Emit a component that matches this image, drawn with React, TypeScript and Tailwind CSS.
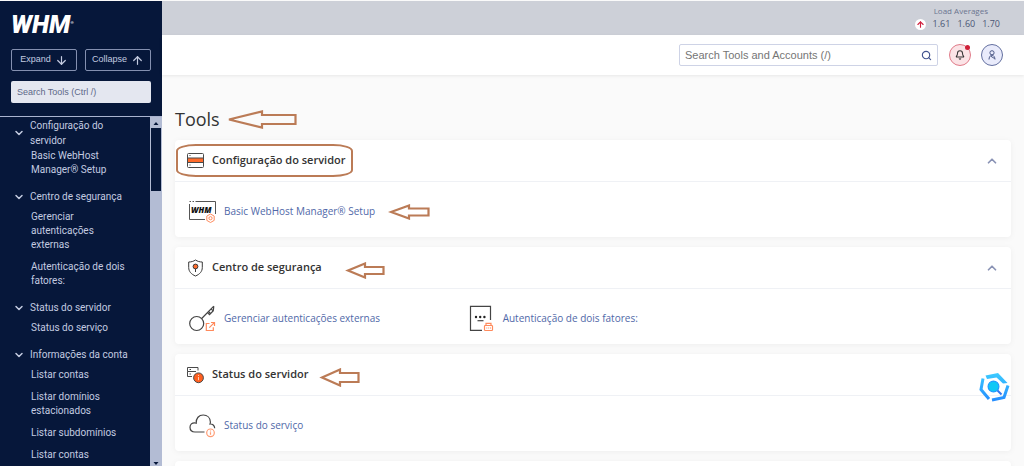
import React from "react";
import { ArrowDown, ArrowUp, Bell, ChevronDown, ChevronUp, Search } from "lucide-react";

type NavGroup = { title: string; items: string[]; tight?: boolean };

const navGroups: NavGroup[] = [
  { title: "Configuração do servidor", items: ["Basic WebHost Manager® Setup"], tight: true },
  { title: "Centro de segurança", items: ["Gerenciar autenticações externas", "Autenticação de dois fatores:"] },
  { title: "Status do servidor", items: ["Status do serviço"] },
  {
    title: "Informações da conta",
    items: ["Listar contas", "Listar domínios estacionados", "Listar subdomínios", "Listar contas"],
  },
];

function Arrow({ width, height, className }: { width: number; height: number; className: string }) {
  const head = Math.round(width * 0.5);
  const m = height / 2;
  const s = height > 18 ? 4.5 : 3.5;
  const points = [
    [3, m],
    [head, 1.5],
    [head, m - s],
    [width - 1.5, m - s],
    [width - 1.5, m + s],
    [head, m + s],
    [head, height - 1.5],
  ]
    .map((p) => p.join(","))
    .join(" ");
  return (
    <svg aria-hidden="true" width={width} height={height} className={"pointer-events-none absolute left-full " + className}>
      <polygon points={points} fill="none" stroke="#bb7b56" strokeWidth="2.2" />
    </svg>
  );
}

function ServerIcon() {
  return (
    <svg width="17" height="17" viewBox="0 0 17 17" fill="none" stroke="#4a4a4a" strokeWidth="1">
      <rect x=".5" y="1.500" width="16" height="14" rx="1" />
      <rect x=".5" y="6" width="16" height="4.500" fill="#ff6c2c" />
      <path d="M2.500 3.500h1M2.500 13h1" />
    </svg>
  );
}

function ShieldIcon() {
  return (
    <svg width="17" height="18" viewBox="0 0 17 18" fill="none" stroke="#3a3a3a" strokeWidth="1">
      <path d="M8.500 1C6.500 2.400 4.200 3 1.700 3v5.500c0 4 2.600 6.800 6.800 8.500 4.200-1.700 6.800-4.500 6.800-8.500V3C12.800 3 10.500 2.400 8.500 1z" />
      <path d="M8.500 9v4" />
      <circle cx="8.500" cy="7.500" r="2.400" fill="#ff6c2c" />
    </svg>
  );
}

function StatusIcon() {
  return (
    <svg width="17" height="18" viewBox="0 0 17 18" fill="none" stroke="#4a4a4a" strokeWidth="1">
      <path d="M11 4.500V1.500H.5v4H9M.5 5.500v5h4.500M2.500 3.500h1.500M2.500 8h1.500" />
      <circle cx="11.500" cy="11.800" r="4.900" fill="#ff5f1f" />
      <path d="M11.500 11v3.200M11.500 9v1" stroke="#ffc9b0" />
    </svg>
  );
}

function WhmSetupIcon() {
  return (
    <svg width="27" height="23" viewBox="0 0 27 23" fill="none" stroke="#555" strokeWidth="1">
      <path d="M.5 4v15.500H16M6.500 1.500H26.500V14M.5 1.500h1.500M3.500 1.500h1.500" />
      <text x="2" y="13" fill="#111" stroke="none" className="font-['Open_Sans'] text-[8px] font-extrabold italic">
        WHM
      </text>
      <g stroke="#ff8a5c">
        <path d="M21.500 14l3.700 2.100v4.300l-3.700 2.100-3.700-2.100v-4.300z" fill="#fff" />
        <circle cx="21.500" cy="18.200" r="1.600" />
      </g>
    </svg>
  );
}

function KeyIcon() {
  return (
    <svg width="27" height="27" viewBox="0 0 27 27" fill="none" stroke="#444" strokeWidth="1.200">
      <circle cx="7.700" cy="18.500" r="7" />
      <path d="M12.700 13.500L24.800 1.200M18.500 7.600l2 2 3.600-3.700-2-2M21.500 8.500l-1.500-1.500M24.800 1.200l-.5 4.500" />
      <g stroke="#ff8a5c">
        <path d="M20.500 18.500h-3.200v7h7v-3.300M22 17.500h3.500V21M25.300 17.700l-5 5" />
      </g>
    </svg>
  );
}

function TwoFactorIcon() {
  return (
    <svg width="27" height="27" viewBox="-2 0 27 27" fill="none" stroke="#444" strokeWidth="1.200">
      <path d="M12 25.400H.5V1.400h20V15" />
      <g fill="#222" stroke="none">
        <circle cx="6" cy="12" r="1.200" />
        <circle cx="10.200" cy="12" r="1.200" />
        <circle cx="14.400" cy="12" r="1.200" />
      </g>
      <path d="M7.500 15.700h6" />
      <g stroke="#ff8a5c">
        <rect x="14.500" y="20.500" width="8" height="5" rx=".8" />
        <path d="M16 20.300V18.300h5v2M16.300 23h1M18.200 23h1M20 23h1" />
      </g>
    </svg>
  );
}

function CloudIcon() {
  return (
    <svg width="27" height="25" viewBox="0 0 27 25" fill="none" stroke="#444" strokeWidth="1.200">
      <path d="M15.500 19H6C3 19 1 17 1 14.300 1 11.500 3 9.600 6 9.800c.3 0 .8.100 1.200.3C7 5.300 9.800 2 14.200 2c4 0 7 2.600 7.200 7 0 .8-.2 1.500-.4 2 2.600-.2 4.500 1.500 4.700 4.200" />
      <circle cx="21.500" cy="19.800" r="3.800" stroke="#ff9a72" />
      <path d="M21.500 19.300v2.500M21.500 17.500v1" stroke="#ff9a72" />
    </svg>
  );
}

function Profile() {
  return (
    <svg width="8" height="10" viewBox="0 0 8 10" fill="none" stroke="#4a5785" strokeWidth="1">
      <circle cx="4" cy="2.800" r="2.100" />
      <path d="M1 9.500C1.100 7 2.200 5.500 4 5c1.800.5 2.900 2 3 4.500M2.500 6L6.500 8.500" />
    </svg>
  );
}

function AssistantBadge() {
  return (
    <svg width="32" height="32" viewBox="0 0 32 32" fill="none" strokeWidth="3">
      <defs>
        <linearGradient id="hex" x1="0" y1="0" x2="0" y2="32" gradientUnits="userSpaceOnUse">
          <stop offset="0" stopColor="#3fd0ff" />
          <stop offset="1" stopColor="#2288ff" />
        </linearGradient>
      </defs>
      <path d="M7.500 4.500L20 2l9.500 10-4.500.5-6.500-6L9 8z" fill="url(#hex)" />
      <path d="M5 7.500L3 18.500 11 28" stroke="url(#hex)" />
      <path d="M14 29L26 26.500 30 14.500" stroke="url(#hex)" />
      <circle cx="15.500" cy="15.500" r="5.400" fill="#10c8f5" stroke="#1f9cff" strokeWidth="1.200" />
      <path d="M19.500 19.500l4 4" stroke="#3377ee" strokeWidth="2" />
    </svg>
  );
}

type Tool = { label: string; icon: React.ReactNode; arrow?: React.ReactNode };

function ToolCard({
  title,
  icon,
  tools,
  arrow,
  highlighted,
  collapsible = true,
}: {
  title: string;
  icon: React.ReactNode;
  tools: Tool[];
  arrow?: React.ReactNode;
  highlighted?: boolean;
  collapsible?: boolean;
}) {
  return (
    <section className="rounded bg-white shadow-[0_1px_6px_rgba(0,0,0,0.05)]">
      <header className="flex h-[42px] items-center justify-between border-b border-[#eff1f5] px-3">
        <h2 className="relative flex items-center gap-2 text-[11px] font-semibold text-[#333]">
          {icon}
          <span>{title}</span>
          {highlighted && (
            <span className="pointer-events-none absolute -inset-y-2 -right-2 -left-[11px] rounded-[20px/7px] border-2 border-[#bb7b56]" />
          )}
          {arrow}
        </h2>
        {collapsible && (
          <button type="button" aria-label={title} className="text-[#8a93b5]">
            <ChevronUp size={14} strokeWidth={3} />
          </button>
        )}
      </header>
      <div className="grid h-[55px] grid-cols-3 items-center pt-[3px]">
        {tools.map((t) => (
          <div key={t.label} className="flex items-center px-[14px]">
            <a href="#" className="relative flex items-center text-[#5068a8]">
              <span className="flex w-[35px] items-center">{t.icon}</span>
              <span className="text-[10px] whitespace-nowrap">{t.label}</span>
              {t.arrow}
            </a>
          </div>
        ))}
      </div>
    </section>
  );
}

function Sidebar() {
  return (
    <aside className="flex w-[162px] shrink-0 flex-col bg-[#06173a] font-[Roboto,sans-serif] text-[#c3cbe0]">
      <div className="border-b border-[#a9b3cf] px-[11px] pt-3 pb-[13px]">
        <div className="flex h-6 items-center text-[25px] leading-6 font-black text-white italic">
          WHM<sup className="text-[4px] not-italic">®</sup>
        </div>
        <div className="mt-3 grid grid-cols-2 gap-2 font-['Liberation_Sans',sans-serif] text-[9px]">
          <button type="button" className="flex h-[22px] items-center justify-center gap-1 rounded-xs border border-[#8490b0]">
            Expand <ArrowDown size={13} strokeWidth={2.2} />
          </button>
          <button type="button" className="flex h-[22px] items-center justify-center gap-1 rounded-xs border border-[#8490b0]">
            Collapse <ArrowUp size={13} strokeWidth={2.2} />
          </button>
        </div>
        <input
          type="text"
          aria-label="Search Tools"
          placeholder="Search Tools (Ctrl /)"
          className="mt-[10px] block h-[22px] w-full rounded-xs bg-[#e4e7f0] px-[6px] font-['Liberation_Sans',sans-serif] text-[9px] placeholder:text-[#5d6888]"
        />
      </div>
      <div className="flex min-h-0 grow">
        <nav className="min-w-0 grow overflow-hidden pt-px text-[10px]">
          {navGroups.map((g) => (
            <div key={g.title} className="mb-3">
              <button type="button" className="flex w-full items-center gap-[5px] pr-4 pl-[13px] text-left leading-[15px]">
                <ChevronDown size={12} strokeWidth={3} className="shrink-0" />
                <span>{g.title}</span>
              </button>
              <ul className={"flex flex-col gap-2 pr-4 pl-[31px] leading-[14px] " + (g.tight ? "mt-px" : "mt-[6px]")}>
                {g.items.map((item, i) => (
                  <li key={i}>
                    <a href="#" className="block">
                      {item}
                    </a>
                  </li>
                ))}
              </ul>
            </div>
          ))}
        </nav>
        <div aria-hidden="true" className="flex w-3 shrink-0 flex-col items-center bg-[#b3bcd4] text-[#06173a]">
          <svg width="12" height="11" fill="currentColor">
            <path d="M3.500 8L6 5l2.500 3z" />
          </svg>
          <div className="h-[63px] w-[10px] bg-[#06173a]" />
          <svg width="12" height="6" fill="currentColor" className="mt-auto">
            <path d="M3.500 2L6 5l2.500-3z" />
          </svg>
        </div>
      </div>
    </aside>
  );
}

export default function App() {
  return (
    <div className="flex h-screen overflow-hidden bg-[#fafafa] pt-px font-['Open_Sans',sans-serif]">
      <Sidebar />
      <div className="flex min-w-0 grow flex-col">
        <div className="flex h-[34px] shrink-0 flex-col items-end bg-[#cdd0d8] pt-1 pr-6 text-[#4b5675]">
          <div className="pr-3 text-[8px] leading-3 text-[#6b7590]">Load Averages</div>
          <div className="flex items-center gap-[7px] text-[9px] leading-[14px]">
            <span className="flex size-[11px] items-center justify-center rounded-full bg-white text-[#d0213f]">
              <ArrowUp size={9} strokeWidth={3} />
            </span>
            <span>1.61</span>
            <span>1.60</span>
            <span>1.70</span>
          </div>
        </div>
        <header className="z-10 flex h-10 shrink-0 items-center justify-end bg-white pr-[21px] shadow-[0_1px_3px_rgba(0,0,0,0.08)]">
          <label className="flex h-[22px] w-[259px] items-center rounded-xs border border-[#ced3e6] px-[5px]">
            <input
              type="text"
              aria-label="Search Tools and Accounts"
              placeholder="Search Tools and Accounts (/)"
              className="min-w-0 grow font-['Liberation_Sans',sans-serif] text-[11px] outline-none placeholder:text-[#757575]"
            />
            <Search size={11} strokeWidth={2.5} className="text-[#43548f]" />
          </label>
          <button
            type="button"
            aria-label="Notifications"
            className="relative ml-[11px] flex size-[22px] items-center justify-center rounded-full border border-[#e07a88] bg-[#fbe3e6] text-[#333]"
          >
            <Bell size={10} strokeWidth={2.5} />
            <span className="absolute top-0 right-0 size-[5px] rounded-full bg-[#cf1f37]" />
          </button>
          <button
            type="button"
            aria-label="Account"
            className="ml-[10px] flex size-[22px] items-center justify-center rounded-full border border-[#6470a0] bg-[#e9ebfb]"
          >
            <Profile />
          </button>
        </header>
        <main className="flex flex-col px-[13px] pt-8">
          <h1 className="relative mb-[9px] self-start text-lg leading-6 text-[#333]">
            Tools
            <Arrow width={71} height={19} className="top-[3px] ml-[6px]" />
          </h1>
          <div className="flex flex-col gap-[10px]">
            <ToolCard
              title="Configuração do servidor"
              icon={<ServerIcon />}
              highlighted
              tools={[
                {
                  label: "Basic WebHost Manager® Setup",
                  icon: <WhmSetupIcon />,
                  arrow: <Arrow width={42} height={16} className="top-1 ml-[13px]" />,
                },
              ]}
            />
            <ToolCard
              title="Centro de segurança"
              icon={<ShieldIcon />}
              arrow={<Arrow width={40} height={17} className="top-[3px] ml-[23px]" />}
              tools={[
                { label: "Gerenciar autenticações externas", icon: <KeyIcon /> },
                { label: "Autenticação de dois fatores:", icon: <TwoFactorIcon /> },
              ]}
            />
            <ToolCard
              title="Status do servidor"
              icon={<StatusIcon />}
              arrow={<Arrow width={41} height={19} className="top-[2px] ml-[11px]" />}
              collapsible={false}
              tools={[{ label: "Status do serviço", icon: <CloudIcon /> }]}
            />
            <section className="h-24 rounded bg-white shadow-[0_1px_6px_rgba(0,0,0,0.05)]" />
          </div>
        </main>
      </div>
      <button type="button" aria-label="Assistant" className="fixed right-[14px] bottom-[63px]">
        <AssistantBadge />
      </button>
    </div>
  );
}
